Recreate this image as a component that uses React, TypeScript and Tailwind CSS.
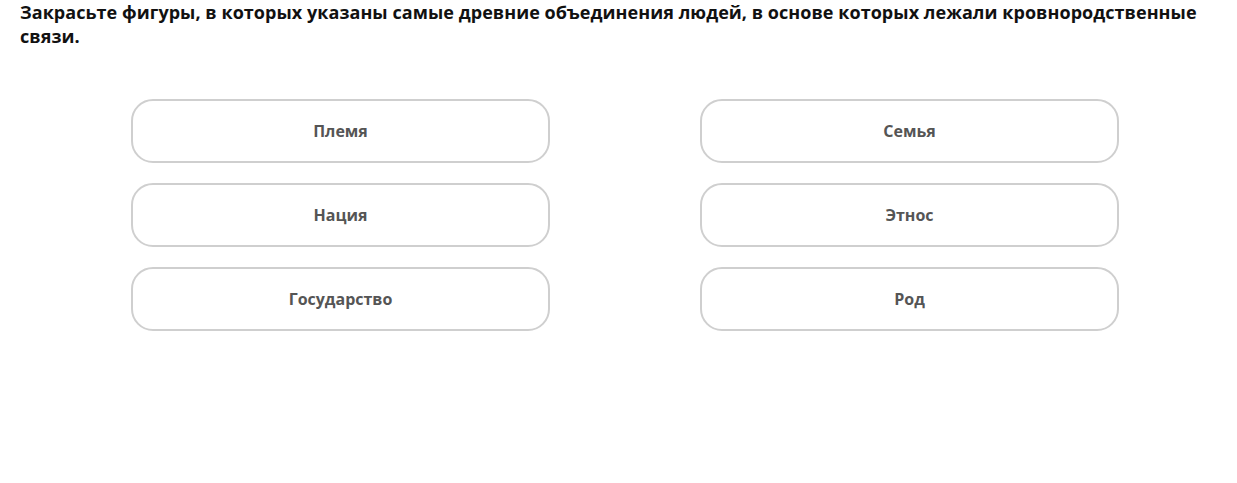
const ITEMS = ['Племя', 'Семья', 'Нация', 'Этнос', 'Государство', 'Род']

export default function App() {
  return (
    <div className="w-[1237px] h-[483px] bg-white" style={{ fontFamily: '"Open Sans", sans-serif' }}>
      <h1 className="pl-5 pr-4 text-[18px] leading-[24px] tracking-[0.05px] font-bold text-[#111]">
        Закрасьте фигуры, в которых указаны самые древние объединения людей, в основе которых лежали кровнородственные
        связи.
      </h1>
      <div className="mt-[51px] ml-[131px] grid grid-cols-[419px_419px] gap-x-[150px] gap-y-[20px]">
        {ITEMS.map(item => (
          <div
            key={item}
            className="h-[64px] flex items-center justify-center border-2 border-[#cfcfcf] rounded-[22px] text-[16px] font-bold text-[#555]"
          >
            {item}
          </div>
        ))}
      </div>
    </div>
  )
}
